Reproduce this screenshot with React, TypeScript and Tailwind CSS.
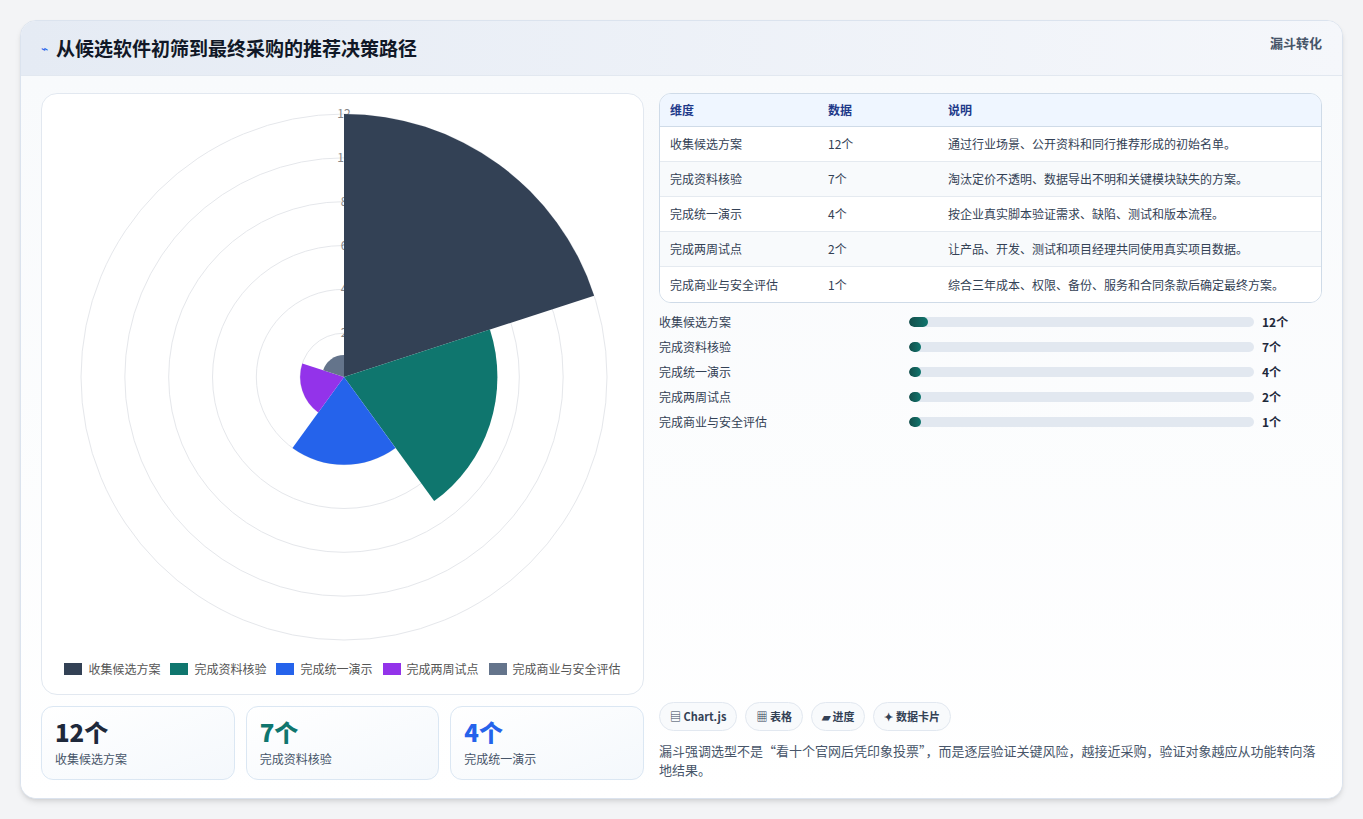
const rows = [
  { name: "收集候选方案", v: 12, note: "通过行业场景、公开资料和同行推荐形成的初始名单。", color: "#334155" },
  { name: "完成资料核验", v: 7, note: "淘汰定价不透明、数据导出不明和关键模块缺失的方案。", color: "#0f766e" },
  { name: "完成统一演示", v: 4, note: "按企业真实脚本验证需求、缺陷、测试和版本流程。", color: "#2563eb" },
  { name: "完成两周试点", v: 2, note: "让产品、开发、测试和项目经理共同使用真实项目数据。", color: "#9333ea" },
  { name: "完成商业与安全评估", v: 1, note: "综合三年成本、权限、备份、服务和合同条款后确定最终方案。", color: "#64748b" },
];

const font = { fontFamily: '"Noto Sans CJK SC", "Noto Sans", sans-serif' };

function sector(cx: number, cy: number, r: number, a0: number, a1: number) {
  const rad = (a: number) => (a * Math.PI) / 180;
  const x0 = cx + r * Math.cos(rad(a0));
  const y0 = cy + r * Math.sin(rad(a0));
  const x1 = cx + r * Math.cos(rad(a1));
  const y1 = cy + r * Math.sin(rad(a1));
  return `M${cx},${cy} L${x0},${y0} A${r},${r} 0 0 1 ${x1},${y1} Z`;
}

function PolarChart() {
  const cx = 301, cy = 283, R = 263;
  return (
    <svg width="600" height="560" className="block">
      {[2, 4, 6, 8, 10, 12].map((t) => (
        <circle key={t} cx={cx} cy={cy} r={(R * t) / 12} fill="none" stroke="#e5e7eb" strokeWidth="1" />
      ))}
      {[2, 4, 6, 8, 10, 12].map((t) => (
        <text key={t} x={cx} y={cy - (R * t) / 12 + 4} textAnchor="middle" fontSize="12" fill="#888" style={font}>{t}</text>
      ))}
      {rows.map((r, i) => (
        <path key={i} d={sector(cx, cy, (R * r.v) / 12, -90 + i * 72, -18 + i * 72)} fill={r.color} />
      ))}
    </svg>
  );
}

export default function App() {
  return (
    <div className="min-h-screen bg-[#f3f4f6] p-5" style={font}>
      <div className="rounded-2xl border border-[#dbe3ee] bg-white shadow-md overflow-hidden h-[779px] flex flex-col">
        <div className="h-[55px] flex items-center justify-between px-5 bg-gradient-to-r from-[#e5ebf4] to-[#f5f7fb] border-b border-[#e2e8f0]">
          <div className="flex items-center gap-2">
            <span className="text-[#2563eb] text-xs">⌁</span>
            <h1 className="text-[19px] font-bold text-[#111827]">从候选软件初筛到最终采购的推荐决策路径</h1>
          </div>
          <span className="text-[13px] font-semibold text-[#475569] self-start mt-3">漏斗转化</span>
        </div>
        <div className="flex-1 bg-gradient-to-b from-[#f8fafc] to-white px-5 pt-[17px] flex gap-[15px]">
          <div className="w-[603px] flex flex-col gap-[11px]">
            <div className="h-[602px] rounded-2xl border border-[#e2e8f0] bg-white flex flex-col items-center">
              <PolarChart />
              <div className="flex items-center gap-2.5 text-[12px] text-[#555] mt-[6px]">
                {rows.map((r) => (
                  <div key={r.name} className="flex items-center gap-1.5">
                    <span className="w-[18px] h-[12px]" style={{ background: r.color }} />
                    {r.name}
                  </div>
                ))}
              </div>
            </div>
            <div className="grid grid-cols-3 gap-[11px]">
              {rows.slice(0, 3).map((r) => (
                <div key={r.name} className="h-[74px] rounded-xl border border-[#dbe7f3] bg-gradient-to-br from-white to-[#f4f8fc] px-[13px] pt-[10px]">
                  <div className="text-[24px] font-extrabold leading-[30px]" style={{ color: r.color === "#334155" ? "#1e293b" : r.color }}>{r.v}个</div>
                  <div className="text-[12px] text-[#475569] mt-[3px]">{r.name}</div>
                </div>
              ))}
            </div>
          </div>
          <div className="flex-1 pr-0 w-[666px] flex flex-col">
            <div className="rounded-xl border border-[#cfdbe8] overflow-hidden text-[12px]">
              <div className="grid grid-cols-[158px_120px_1fr] px-[10px] h-[33px] items-center bg-[#eff6ff] border-b border-[#cfdbe8] font-semibold text-[#1e3a8a]">
                <span>维度</span><span>数据</span><span>说明</span>
              </div>
              {rows.map((r, i) => (
                <div key={r.name} className={`grid grid-cols-[158px_120px_1fr] px-[10px] h-[35px] items-center text-[#334155] ${i % 2 ? "bg-[#f8fafc]" : "bg-white"} ${i < 4 ? "border-b border-[#e5eaf0]" : ""}`}>
                  <span>{r.name}</span><span>{r.v}个</span><span>{r.note}</span>
                </div>
              ))}
            </div>
            <div className="mt-[12px] flex flex-col gap-[11px] text-[12px] text-[#334155]">
              {rows.map((r) => (
                <div key={r.name} className="flex items-center h-[14px]">
                  <span className="w-[250px]">{r.name}</span>
                  <div className="w-[345px] h-[10px] rounded-full bg-[#e2e8f0] overflow-hidden">
                    <div className="h-full rounded-full bg-gradient-to-r from-[#134e4a] to-[#0f766e]" style={{ width: `${Math.max(r.v * 0.45, 3.5)}%` }} />
                  </div>
                  <span className="ml-[8px] font-bold text-[#1e293b]">{r.v}个</span>
                </div>
              ))}
            </div>
            <div className="mt-auto mb-[19px]">
              <div className="flex gap-2 text-[11px] font-semibold text-[#334155]">
                {["▤ Chart.js", "▦ 表格", "▰ 进度", "✦ 数据卡片"].map((c) => (
                  <span key={c} className="h-[29px] px-[10px] flex items-center rounded-full border border-[#e2e8f0] bg-[#f8fafc]">{c}</span>
                ))}
              </div>
              <p className="mt-[10px] text-[13px] leading-[19px] text-[#475569]">漏斗强调选型不是“看十个官网后凭印象投票”，而是逐层验证关键风险，越接近采购，验证对象越应从功能转向落地结果。</p>
            </div>
          </div>
        </div>
      </div>
    </div>
  );
}
